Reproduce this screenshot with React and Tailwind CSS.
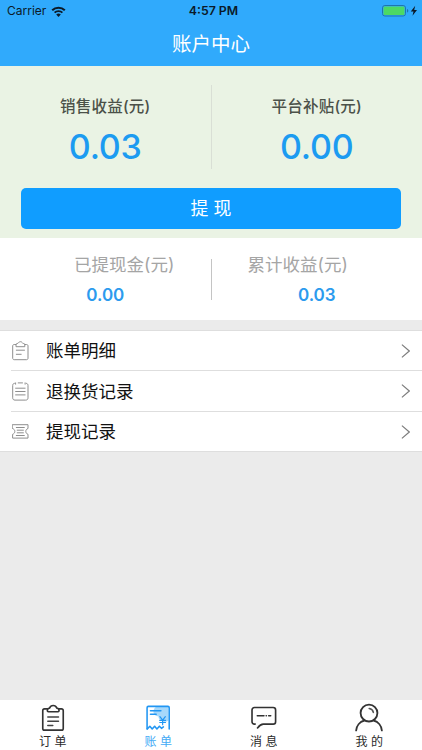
const menus = [
  { label: "账单明细", icon: BillIcon },
  { label: "退换货记录", icon: ReturnIcon },
  { label: "提现记录", icon: TicketIcon },
];

const tabs = [
  { label: "订 单", icon: OrderTabIcon },
  { label: "账 单", icon: BillTabIcon, active: true },
  { label: "消 息", icon: MessageTabIcon },
  { label: "我 的", icon: MineTabIcon },
];

function WifiIcon() {
  return (
    <svg width="15" height="11" viewBox="0 0 14 11" fill="none" stroke="#0b1a28">
      <path d="M0.7 4.300a8.900 8.900 0 0 1 12.600 0" strokeWidth="2" />
      <path d="M3.100 6.700a5.500 5.500 0 0 1 7.800 0" strokeWidth="1.900" />
      <path d="M7 10.900 4.700 8.500a3.300 3.300 0 0 1 4.600 0z" fill="#0b1a28" stroke="none" />
    </svg>
  );
}

function BatteryIcon() {
  return (
    <svg width="36" height="12" viewBox="0 0 36 12" fill="none">
      <rect x="0.5" y="0.5" width="23" height="10.5" rx="2.4" stroke="#1f74ae" />
      <rect x="1.5" y="1.5" width="21" height="8.5" rx="1.2" fill="#4cd964" />
      <path d="M25 4v3.600c1-.3 1.300-1 1.300-1.800S26 4.300 25 4z" fill="#1f74ae" />
      <path d="M33.200 0.800 28.800 6.600h2.700l-1 4.200 4.500-5.900h-2.800z" fill="#0b1a28" />
    </svg>
  );
}

function BillIcon() {
  return (
    <svg width="17" height="20" viewBox="0 0 17 20" fill="none" stroke="#8e8e8e" strokeLinecap="round" strokeLinejoin="round">
      <path d="M4 3.500H2.200C1.300 3.500.700 4 .700 5v12.200c0 .9.600 1.500 1.500 1.500h12.300c.9 0 1.500-.6 1.500-1.500V5c0-1-.6-1.500-1.500-1.500h-1.700" />
      <path d="M4 5.300V3.600c0-.7.500-1 1.200-1.100.7 0 1-.2 1.300-.8C6.900 1 7.500.700 8.400.700s1.500.3 1.900 1c.3.600.6.800 1.300.8.700.1 1.200.4 1.200 1.100v1.700z" />
      <path d="M4.300 9.200h8.200M4.300 13.300h4.900" />
    </svg>
  );
}

function ReturnIcon() {
  return (
    <svg width="17" height="19" viewBox="0 0 17 19" fill="none" stroke="#8e8e8e" strokeLinecap="round">
      <path d="M2.400 1.300C1.300 1.500.700 2.200.700 3.400v12.400c0 1.500.8 2.300 2.300 2.300h10.700c1.500 0 2.300-.8 2.300-2.300V3.400c0-1.200-.6-1.900-1.700-2.100M6.200.900h4.300M3.600.9v1.300M13.100.9v1.300" />
      <path d="M3.600 6.200h9.500M3.600 9.500h9.500M3.600 12.900h9.500" />
    </svg>
  );
}

function TicketIcon() {
  return (
    <svg width="17" height="15" viewBox="0 0 17 15" fill="none" stroke="#8e8e8e" strokeLinecap="round" strokeLinejoin="round">
      <path d="M.600.700H16v3.800c-1.500.6-2.200 1.500-2.200 2.900s.7 2.300 2.200 2.900v3.800H.600v-3.800c1.500-.6 2.200-1.500 2.200-2.900S2.100 5.100.600 4.500z" />
      <path d="M4.300 3.500h8M5.200 6.200h6.200M5.200 8.800h6.200M4.300 11.500h8" />
    </svg>
  );
}

function ArrowIcon() {
  return (
    <svg width="9" height="14" viewBox="0 0 9 14" fill="none" stroke="#7c7c7c" strokeWidth="1.200">
      <path d="M.900.600 8.300 7 .900 13.400" />
    </svg>
  );
}

function OrderTabIcon() {
  return (
    <svg width="28" height="30" viewBox="0 0 28 30" fill="none" stroke="#333" strokeWidth="1.700" strokeLinecap="round" strokeLinejoin="round">
      <path d="M8.200 6.100H5.200c-1.100 0-1.800.7-1.800 1.800v18.400c0 1.100.7 1.800 1.800 1.800h17.600c1.100 0 1.800-.7 1.800-1.800V7.900c0-1.100-.7-1.800-1.800-1.800h-2.600" />
      <path d="M9.300 9c-1 0-1.300-.8-1.100-1.700.2-1.200 1-1.900 2.200-2 .7-1.800 2-2.700 3.800-2.700s3.100.9 3.800 2.700c1.200.1 2 .8 2.200 2 .2.900-.1 1.700-1.100 1.700z" />
      <path d="M8.600 14.400h11.100M8.600 18.900h11.100M8.600 23.300h5.200" stroke="#444" strokeWidth="1.500" />
    </svg>
  );
}

function BillTabIcon() {
  return (
    <svg width="28" height="30" viewBox="0 0 28 30" fill="none" stroke="#2196f3" strokeWidth="1.600" strokeLinecap="round" strokeLinejoin="round">
      <path d="M9.300 9c0-2 1.500-5 3.500-5h12v14c-2 1.500-4.600 1.800-7 .700-2.300-1-3.300-3-3.400-5-2.800 0-5.100-2-5.100-4.700z" fill="#a6d8fb" stroke="none" />
      <path d="M2.700 27V4.800c0-.9.400-1.300 1.300-1.300h20.300c.9 0 1.300.4 1.300 1.300V27" />
      <path d="m2.900 26.800 2.700-2.800 2.400 2.800 2.500-2.800 2.400 2.800 2.500-2.800 2.200 2.200 2-1.500" />
      <path d="M6.200 8.100H17M6.200 11.600h5.900" />
      <path d="m16 14.200 2.800 3.500 2.800-3.500M15.800 18h6M15.800 20.200h6M18.800 17.700v4.700" strokeWidth="1.200" />
    </svg>
  );
}

function MessageTabIcon() {
  return (
    <svg width="28" height="30" viewBox="0 0 28 30" fill="none" stroke="#333" strokeWidth="1.700" strokeLinecap="round" strokeLinejoin="round">
      <path d="M4.900 21.800H4.100c-1.500 0-2.500-1-2.500-2.500V7.200c0-1.500 1-2.500 2.500-2.500h19.400c1.500 0 2.500 1 2.500 2.500v12.100c0 1.500-1 2.500-2.500 2.500h-10.300c-2.200 0-4 1.500-5.900 4" />
      <path d="M7 13.200h7M16.200 13.200h.3M18.800 13.200h2.200" strokeWidth="1.500" />
    </svg>
  );
}

function MineTabIcon() {
  return (
    <svg width="30" height="30" viewBox="0 0 30 30" fill="none" stroke="#333" strokeWidth="1.900" strokeLinecap="round">
      <circle cx="15" cy="10.400" r="8.700" />
      <path d="M1.700 28.400c.3-4.700 3.700-9 8.500-10.300M19.800 18.100C24.600 19.400 28 23.700 28.300 28.400" />
      <path d="M15.200 5.800c2.200.3 3.900 1.800 4.300 4" stroke="#555" strokeWidth="1.600" />
    </svg>
  );
}

function MainStat({ label, value }) {
  return (
    <div className="flex flex-1 flex-col items-center">
      <span className="h-6 text-[15.500px] leading-6 font-medium tracking-[0.200px] text-[#4b5149]">{label}</span>
      <span className="mt-[8px] h-10 text-[34px] leading-10 font-medium tracking-[-0.200px] text-[#1c9bf1]">{value}</span>
    </div>
  );
}

export default function App() {
  return (
    <div className="flex h-[750px] w-[422px] flex-col overflow-hidden bg-[#ebebeb] font-[Inter,'Noto_Sans_CJK_SC',sans-serif]">
      {/* Barra de status + título */}
      <header className="h-[66px] shrink-0 bg-[#30aafc]">
        <div className="grid h-[22px] grid-cols-3 items-center px-[7px] text-[#0b1a28]">
          <div className="flex items-center gap-[5px] text-[12px]">
            <span>Carrier</span>
            <WifiIcon />
          </div>
          <span className="pt-px pl-[5px] text-center text-[12.300px] font-semibold whitespace-nowrap">4:57 PM</span>
          <div className="-mr-[3px] flex justify-end">
            <BatteryIcon />
          </div>
        </div>
        <h1 className="pt-px text-center text-[19.500px] leading-[42px] text-white">账户中心</h1>
      </header>

      <section className="h-[172px] shrink-0 bg-[#eaf3e4] px-[21px] pt-[19px]">
        <div className="-mx-[21px] flex h-[84px]">
          <div className="flex flex-1 pt-[10px]">
            <MainStat label="销售收益(元)" value="0.03" />
          </div>
          <div className="w-px bg-[#d9dfd5]" />
          <div className="flex flex-1 pt-[10px]">
            <MainStat label="平台补贴(元)" value="0.00" />
          </div>
        </div>
        <button className="mt-[19px] block h-[41px] w-full rounded-[5px] bg-[#109dff] pt-[2px] text-[17.900px] text-white">提 现</button>
      </section>

      <section className="flex h-[82px] shrink-0 items-center bg-white">
        <div className="flex flex-1 flex-col items-center">
          <span className="pt-[2px] pl-[38px] text-[17.500px] leading-6 text-[#a5a5a5]">已提现金(元)</span>
          <span className="mt-[6px] text-[17px] leading-6 font-semibold text-[#2c9bee]">0.00</span>
        </div>
        <div className="h-[41px] w-px bg-[#c4c4c4]" />
        <div className="flex flex-1 flex-col items-center">
          <span className="pt-[2px] pr-[38px] text-[17.500px] leading-6 text-[#a5a5a5]">累计收益(元)</span>
          <span className="mt-[6px] text-[17px] leading-6 font-semibold text-[#2c9bee]">0.03</span>
        </div>
      </section>

      <ul className="mt-[10px] h-[122px] shrink-0 border-y border-[#dedede] bg-white pl-[11px]">
        {menus.map(({ label, icon: Icon }) => (
          <li key={label} className="flex h-[41px] items-center border-b border-[#dedede] pr-3 first:h-[40px] last:h-[39px] last:border-b-0">
            <span className="flex w-[18px] justify-center"><Icon /></span>
            <span className="ml-[17px] flex-1 pt-[2px] text-[17.500px] text-[#111]">{label}</span>
            <ArrowIcon />
          </li>
        ))}
      </ul>

      <nav className="mt-auto flex h-[50px] shrink-0 bg-white">
        {tabs.map(({ label, icon: Icon, active }) => (
          <div key={label} className="flex flex-1 flex-col items-center pt-[3px]">
            <Icon />
            <span className={active ? "pt-[2px] text-[12px] leading-[16px] text-[#45abf5]" : "pt-[2px] text-[12px] leading-[16px] text-[#2a2a2a]"}>{label}</span>
          </div>
        ))}
      </nav>
    </div>
  );
}
